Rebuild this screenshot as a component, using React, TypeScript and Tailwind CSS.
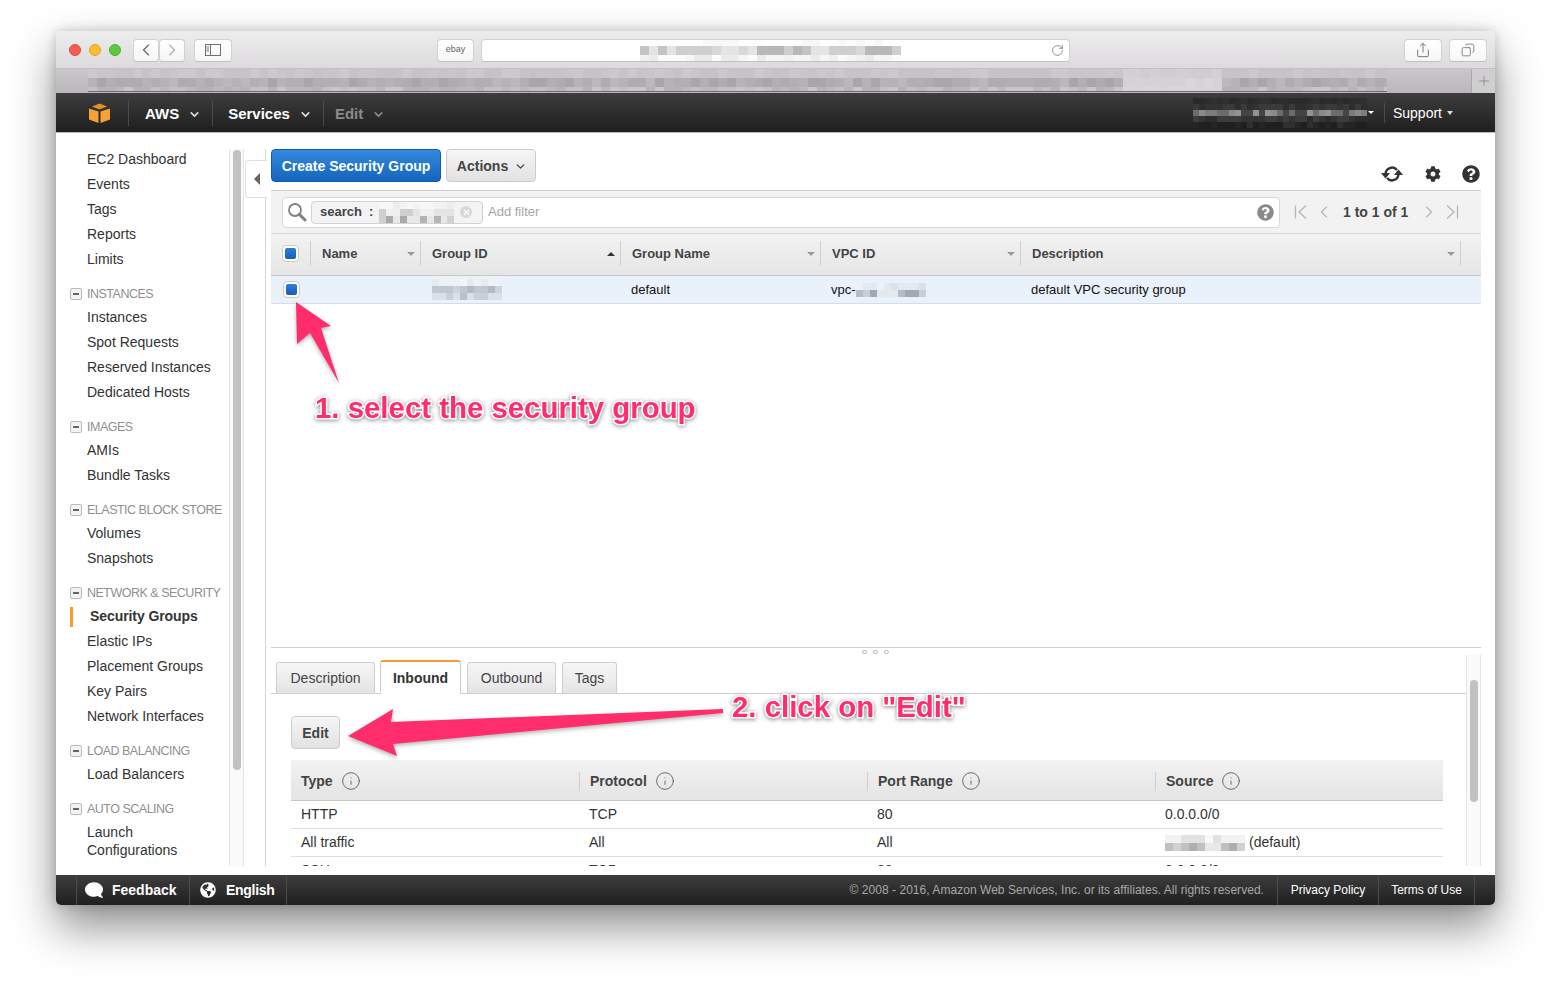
import { ChevronDown, ChevronLeft, ChevronRight, Info, RotateCw, Share, Copy, Plus, X } from 'lucide-react';
import { FaCog, FaComment, FaGlobeAmericas, FaQuestionCircle } from 'react-icons/fa';

// pixelated (redacted) strip, one palette per row
const Blur = ({ cols, cell, palettes, seed = 1 }: { cols: number; cell: number; palettes: string[][]; seed?: number }) => (
    <div className="flex flex-col shrink-0">
        {palettes.map((palette, r) => (
            <div key={r} className="flex">
                {Array.from({ length: cols }).map((_, c) => {
                    const noise = Math.abs(Math.sin(c * 12.9898 + r * 78.233 + seed) * 43758.5453) % 1;
                    return <div key={c} style={{ width: cell, height: cell, backgroundColor: palette[Math.floor(noise * palette.length)] }} />;
                })}
            </div>
        ))}
    </div>
);

const tabGrey = [
    ['#c8c6c8', '#c5c3c5', '#cbc9cb', '#c6c4c6'],
    ['#aeacae', '#b5b3b5', '#a8a6a8', '#bab8ba', '#b1afb1'],
    ['#bbb9bb', '#c2c0c2', '#b5b3b5', '#c8c6c8'],
];
const tabLight = [['#d2d0d2', '#cfcdcf'], ['#d8d6d8', '#d4d2d4'], ['#d8d6d8', '#d6d4d6']];

const Chrome = ({ className, children }: { className: string; children: React.ReactNode }) => (
    <div className={`h-[23px] flex items-center justify-center bg-gradient-to-b from-white to-[#f6f6f6] border border-[#d2d0d2] border-b-[#c2c0c2] rounded-[4px] text-[#666] ${className}`}>
        {children}
    </div>
);

const TitleBar = () => (
    <div className="h-[37px] pt-px flex items-center bg-gradient-to-b from-[#eeedee] to-[#dcdadc] rounded-t-[5px] relative">
        <div className="flex gap-[8px] ml-[13px]">
            <div className="w-[12px] h-[12px] rounded-full bg-[#f45c54] border border-[#e2483f]" />
            <div className="w-[12px] h-[12px] rounded-full bg-[#fbbd2e] border border-[#e3a521]" />
            <div className="w-[12px] h-[12px] rounded-full bg-[#5fc83f] border border-[#4cb02d]" />
        </div>
        <Chrome className="w-[26px] ml-[12px]"><ChevronLeft size={20} strokeWidth={1.4} /></Chrome>
        <Chrome className="w-[26px] text-[#b0b0b0]"><ChevronRight size={20} strokeWidth={1.4} /></Chrome>
        <Chrome className="w-[38px] ml-[9px]">
            <svg width="16" height="12" viewBox="0 0 16 12" fill="none" stroke="#707070">
                <rect x="0.5" y="0.5" width="15" height="11" />
                <path d="M5.5 0.5V11.5M1.5 3H4M1.5 5H4M1.5 7H4" />
            </svg>
        </Chrome>
        <Chrome className="w-[37px] ml-[205px] text-[9px]">ebay</Chrome>
        <Chrome className="w-[589px] ml-[7px] relative justify-start bg-none bg-white overflow-hidden">
            <div className="ml-[158px]">
                <Blur
                    cols={29}
                    cell={9}
                    seed={4}
                    palettes={[
                        ['#ffffff', '#fdfdfd', '#f8f8f8'],
                        ['#d8d8d8', '#c4c4c4', '#e4e4e4', '#b8b8b8', '#cfcfcf'],
                        ['#f6f6f6', '#f0f0f0', '#fbfbfb', '#ebebeb'],
                    ]}
                />
            </div>
            <RotateCw size={13} strokeWidth={1.3} className="absolute right-[5px] top-[4px]" />
        </Chrome>
        <Chrome className="w-[38px] ml-[334px]"><Share size={16} strokeWidth={1.3} /></Chrome>
        <Chrome className="w-[38px] ml-[7px]"><Copy size={14} strokeWidth={1.3} className="scale-x-[-1]" /></Chrome>
    </div>
);

const TabBar = () => (
    <div className="h-[25px] flex bg-gradient-to-b from-[#c9c7c9] to-[#b9b7b9] border-t border-[#c2c0c2]">
        <div className="flex ml-[32px] w-[1299px] border-b-[1px] border-[#6e6e6e] h-[23px] overflow-hidden">
            <Blur cols={115} cell={9} palettes={tabGrey} seed={2} />
            <Blur cols={11} cell={9} palettes={tabLight} seed={3} />
            <Blur cols={20} cell={9} palettes={tabGrey} seed={6} />
        </div>
        <div className="flex-1" />
        <div className="w-[24px] flex items-center justify-center border-l border-[#a9a7a9] bg-[#d0ced0] text-[#7a7a7a]">
            <Plus size={16} strokeWidth={1} />
        </div>
    </div>
);

const NavItem = ({ label, className, chevron }: { label: string; className: string; chevron: string }) => (
    <div className="flex items-center h-[26px] border-l border-[#4b4b4b]">
        <span className={`mt-[3px] text-[15px] font-bold ${className}`}>{label}</span>
        <ChevronDown size={13} strokeWidth={3} className={`mt-[3px] ${chevron}`} />
    </div>
);

const NavBar = () => (
    <div className="h-[40px] flex items-center bg-gradient-to-b from-[#3d3d3d] to-[#1f1f1f] border-b border-[#bdbdbd]">
        <svg width="21" height="20" viewBox="0 0 21 20" className="ml-[33px] mr-[18px]">
            <path d="M0 5.5L9.5 8.5V20L0 16.5Z" fill="#f7a035" />
            <path d="M11.5 8.5L21 5.5V16.5L11.5 20Z" fill="#f7a035" />
            <path d="M3 3.5L10.5 0.5L18 3.5L10.5 6.5Z" fill="#e88f24" />
        </svg>
        <NavItem label="AWS" className="ml-[16px] mr-[9px] text-white" chevron="mr-[11px] text-[#ddd]" />
        <NavItem label="Services" className="ml-[15px] mr-[9px] text-white" chevron="mr-[11px] text-[#ddd]" />
        <NavItem label="Edit" className="ml-[11px] mr-[9px] text-[#8a8a8a]" chevron="text-[#8a8a8a]" />
        <div className="ml-auto flex items-center">
            <Blur
                cols={29}
                cell={6}
                seed={5}
                palettes={[
                    ['#2a2a2a', '#303030', '#2d2d2d'],
                    ['#333333', '#3a3a3a', '#2e2e2e'],
                    ['#8a8a8a', '#7c7c7c', '#6c6c6c', '#929292', '#444444'],
                    ['#2b2b2b', '#333333', '#3c3c3c'],
                    ['#1f1f1f', '#252525', '#2f2f2f'],
                ]}
            />
            <div className="w-0 h-0 border-l-[3px] border-r-[3px] border-t-[3px] border-transparent border-t-white ml-[1px]" />
            <div className="w-px h-[20px] bg-[#4b4b4b] ml-[10px]" />
            <span className="mt-[2px] text-[14px] text-white ml-[8px]">Support</span>
            <div className="w-0 h-0 border-l-[3px] border-r-[3px] border-t-[4px] border-transparent border-t-[#ddd] ml-[5px] mr-[42px]" />
        </div>
    </div>
);

const sections = [
    { items: ['EC2 Dashboard', 'Events', 'Tags', 'Reports', 'Limits'] },
    { title: 'INSTANCES', items: ['Instances', 'Spot Requests', 'Reserved Instances', 'Dedicated Hosts'] },
    { title: 'IMAGES', items: ['AMIs', 'Bundle Tasks'] },
    { title: 'ELASTIC BLOCK STORE', items: ['Volumes', 'Snapshots'] },
    { title: 'NETWORK & SECURITY', items: ['Security Groups', 'Elastic IPs', 'Placement Groups', 'Key Pairs', 'Network Interfaces'] },
    { title: 'LOAD BALANCING', items: ['Load Balancers'] },
    { title: 'AUTO SCALING', items: ['Launch Configurations'] },
];

const Sidebar = () => (
    <div className="w-[173px] shrink-0 pt-[14px] overflow-hidden">
        {sections.map((section, i) => (
            <div key={i} className={section.title ? 'mt-[11px]' : ''}>
                {section.title && (
                    <div className="h-[22px] flex items-center pl-[14px]">
                        <div className="w-[12px] h-[12px] flex items-center justify-center rounded-[2px] border border-[#bbb] bg-[#f2f2f2] mr-[5px]">
                            <div className="w-[6px] h-[2px] bg-[#666]" />
                        </div>
                        <span className="text-[12.5px] tracking-[-0.5px] text-[#8f8f8f] whitespace-nowrap">{section.title}</span>
                    </div>
                )}
                {section.items.map((item) =>
                    item === 'Security Groups' ? (
                        <div key={item} className="h-[25px] flex items-center pl-[14px]">
                            <div className="w-[3px] h-[20px] bg-[#f79c2d] mr-[17px]" />
                            <span className="text-[14px] font-bold text-[#333] tracking-[-0.08px]">{item}</span>
                        </div>
                    ) : item === 'Launch Configurations' ? (
                        <div key={item} className="pl-[31px] pt-[3px] text-[14px] leading-[18px] text-[#333] w-[140px]">{item}</div>
                    ) : (
                        <div key={item} className="h-[25px] flex items-center pl-[31px] text-[14px] text-[#333] whitespace-nowrap">{item}</div>
                    ),
                )}
            </div>
        ))}
    </div>
);

const Rail = () => (
    <>
        <div className="w-[15px] shrink-0 mt-[16px] border-x border-[#e4e4e4] bg-[#fafafa] relative">
            <div className="absolute left-[3px] top-[1px] w-[8px] h-[620px] rounded-[4px] bg-[#c2c2c2]" />
        </div>
        <div className="w-[22px] shrink-0 mt-[16px] border-r border-[#d5d5d5] relative">
            <div className="absolute left-[1px] top-[11px] w-[22px] h-[38px] bg-white border border-r-0 border-[#e0e0e0] rounded-l-[4px] flex items-center justify-center">
                <div className="w-0 h-0 border-y-[6px] border-r-[6px] border-transparent border-r-[#666]" />
            </div>
        </div>
    </>
);

const columns = [
    { label: 'Name', width: 'w-[110px]', arrow: 'down' },
    { label: 'Group ID', width: 'w-[200px]', arrow: 'up' },
    { label: 'Group Name', width: 'w-[200px]', arrow: 'down' },
    { label: 'VPC ID', width: 'w-[200px]', arrow: 'down' },
    { label: 'Description', width: 'w-[440px]', arrow: 'down' },
];

const Checkbox = ({ className }: { className: string }) => (
    <div className={`w-[17px] h-[17px] p-[2px] rounded-[4px] border border-[#ccc] bg-white ${className}`}>
        <div className="w-full h-full rounded-[2px] bg-gradient-to-b from-[#2c7fd8] to-[#165fb5]" />
    </div>
);

const Toolbar = () => (
    <div className="h-[58px] shrink-0 flex border-b border-[#cfcfcf]">
        <button className="mt-[16px] h-[33px] w-[170px] pt-px rounded-[4px] border border-[#115ca8] bg-gradient-to-b from-[#338ade] to-[#1464bd] text-white text-[14px] font-bold">Create Security Group</button>
        <button className="mt-[16px] h-[33px] w-[90px] pt-px pl-[2px] ml-[5px] rounded-[4px] border border-[#ccc] bg-gradient-to-b from-[#f6f6f6] to-[#e2e2e2] text-[#444] text-[14px] font-bold flex items-center justify-center gap-[6px]">
            Actions <ChevronDown size={13} strokeWidth={2.5} />
        </button>
        <div className="ml-auto flex items-center mt-[24px] text-[#333]">
            <svg width="22" height="16" viewBox="0 0 22 16" fill="none" stroke="currentColor" strokeWidth="2.4">
                <path d="M4.5 8A6.5 6.5 0 0 1 16 4" />
                <path d="M17.5 8A6.5 6.5 0 0 1 6 12" />
                <path d="M0 7H9L4.5 12.5Z" fill="currentColor" stroke="none" />
                <path d="M22 9H13L17.5 3.5Z" fill="currentColor" stroke="none" />
            </svg>
            <FaCog size={16} className="ml-[22px]" />
            <FaQuestionCircle size={18} className="ml-[21px] mr-[1px]" />
        </div>
    </div>
);

const FilterBar = () => (
    <div className="h-[43px] shrink-0 flex items-center bg-[#f2f2f2] border-b border-[#d5d5d5]">
        <div className="ml-[11px] w-[998px] h-[31px] flex items-center bg-white border border-[#d8d8d8] rounded-[4px]">
            <svg width="20" height="20" viewBox="0 0 20 20" fill="none" stroke="#808080" className="ml-[4px]">
                <circle cx="8" cy="8" r="6" strokeWidth="1.8" />
                <path d="M12.5 12.5L18 18" strokeWidth="3" strokeLinecap="round" />
            </svg>
            <div className="ml-[4px] h-[23px] w-[172px] flex items-center rounded-[4px] border border-[#d2d2d2] bg-[#f3f3f3] pl-[8px] overflow-hidden">
                <span className="text-[13px] font-bold text-[#444]">search</span>
                <span className="text-[13px] font-bold text-[#444] ml-[7px] mr-[6px]">:</span>
                <div className="w-[75px] shrink-0">
                    <Blur
                        cols={11}
                        cell={7}
                        seed={7}
                        palettes={[
                            ['#f3f3f3', '#ececec', '#f7f7f7'],
                            ['#e4e4e4', '#cfcfcf', '#f0f0f0'],
                            ['#d0d0d0', '#aaaaaa', '#b4b4b4', '#e8e8e8'],
                        ]}
                    />
                </div>
                <div className="ml-[6px] w-[12px] h-[12px] rounded-full bg-[#d8d8d8] flex items-center justify-center text-white">
                    <X size={9} strokeWidth={3} />
                </div>
            </div>
            <span className="ml-[5px] text-[13px] text-[#a5a5a5]">Add filter</span>
            <FaQuestionCircle size={17} className="ml-auto mr-[5px] text-[#8a8a8a]" />
        </div>
        <div className="flex items-center text-[#b5b5b5] ml-[14px]">
            <svg width="14" height="16" viewBox="0 0 14 16" fill="none" stroke="currentColor" strokeWidth="1.3"><path d="M1.5 1.5V14.5M12 1.5L5 8L12 14.5" /></svg>
            <ChevronLeft size={20} strokeWidth={1.4} className="ml-[6px]" />
            <span className="text-[14px] font-bold text-[#444] ml-[9px] whitespace-nowrap">1 to 1 of 1</span>
            <ChevronRight size={20} strokeWidth={1.4} className="ml-[11px]" />
            <svg width="14" height="16" viewBox="0 0 14 16" fill="none" stroke="currentColor" strokeWidth="1.3" className="ml-[6px]"><path d="M12.5 1.5V14.5M2 1.5L9 8L2 14.5" /></svg>
        </div>
    </div>
);

const GroupTable = () => (
    <>
        <div className="h-[42px] shrink-0 pb-[2px] flex items-center bg-gradient-to-b from-[#f2f2f2] to-[#e6e6e6] border-b border-[#c8c8c8]">
            <div className="w-[40px] shrink-0 h-[25px] flex items-center border-r border-[#d0d0d0]">
                <Checkbox className="ml-[11px]" />
            </div>
            {columns.map((col) => (
                <div key={col.label} className={`${col.width} shrink-0 h-[25px] flex items-center justify-between pl-[11px] pr-[5px] border-r border-[#d0d0d0]`}>
                    <span className="text-[13px] font-bold text-[#444]">{col.label}</span>
                    {col.arrow === 'up' ? (
                        <div className="w-0 h-0 border-x-[4px] border-b-[4px] border-transparent border-b-[#333]" />
                    ) : (
                        <div className="w-0 h-0 border-x-[4px] border-t-[4px] border-transparent border-t-[#999]" />
                    )}
                </div>
            ))}
        </div>
        <div className="h-[28px] shrink-0 flex items-center bg-[#e9f1fb] border-b border-[#d5dde8] text-[13px] text-[#111]">
            <Checkbox className="ml-[12px] mr-[11px]" />
            <div className="w-[110px] shrink-0" />
            <div className="w-[200px] shrink-0 pl-[11px]">
                <Blur
                    cols={10}
                    cell={7}
                    seed={8}
                    palettes={[
                        ['#f3f5f8', '#eef1f5', '#e7ebf0'],
                        ['#bfc7d2', '#b3bac6', '#cdd3dc', '#dbe0e8'],
                        ['#c8cfd9', '#b8c0cb', '#dbe0e8'],
                    ]}
                />
            </div>
            <div className="w-[200px] shrink-0 pl-[10px]">default</div>
            <div className="w-[200px] shrink-0 pl-[10px] flex items-center">
                vpc-
                <Blur
                    cols={10}
                    cell={7}
                    seed={9}
                    palettes={[
                        ['#e4e9f0', '#dbe1e9', '#eef2f7'],
                        ['#b4bcc6', '#c8cfd8', '#a0a8b3', '#e4e9f0'],
                    ]}
                />
            </div>
            <div className="pl-[10px]">default VPC security group</div>
        </div>
    </>
);

const tabs = [
    { label: 'Description', width: 'w-[99px] mr-[5px]' },
    { label: 'Inbound', width: 'w-[81px] mr-[6px]', active: true },
    { label: 'Outbound', width: 'w-[89px] mr-[6px]' },
    { label: 'Tags', width: 'w-[55px]' },
];

const rules = [
    ['HTTP', 'TCP', '80', '0.0.0.0/0'],
    ['All traffic', 'All', 'All', ''],
    ['SSH', 'TCP', '22', '0.0.0.0/0'],
];

const DetailPanel = () => (
    <div className="flex-1 min-h-0 flex flex-col border-t border-[#cfcfcf] overflow-hidden">
        <div className="h-[7px] shrink-0 flex justify-center items-center gap-[6px] pr-[2px]">
            <div className="w-[5px] h-[4px] rounded-full border border-[#bbb]" />
            <div className="w-[5px] h-[4px] rounded-full border border-[#bbb]" />
            <div className="w-[5px] h-[4px] rounded-full border border-[#bbb]" />
        </div>
        <div className="flex-1 min-h-0 flex">
            <div className="flex-1 min-w-0 pt-[5px] overflow-hidden">
                <div className="h-[34px] flex items-end pl-[5px] border-b border-[#cfcfcf]">
                    {tabs.map((tab) => (
                        <div
                            key={tab.label}
                            className={
                                tab.active
                                    ? `${tab.width} h-[34px] pt-px -mb-px flex items-center justify-center text-[14px] font-bold text-[#333] bg-white border border-b-0 border-[#cfcfcf] border-t-2 border-t-[#f79c2d] rounded-t-[3px]`
                                    : `${tab.width} h-[31px] pt-px flex items-center justify-center text-[14px] text-[#444] bg-gradient-to-b from-[#f6f6f6] to-[#e4e4e4] border border-b-0 border-[#cfcfcf] rounded-t-[3px]`
                            }
                        >
                            {tab.label}
                        </div>
                    ))}
                </div>
                <div className="pl-[20px] pr-[23px]">
                    <button className="mt-[22px] w-[49px] h-[33px] pt-px rounded-[4px] border border-[#ccc] bg-gradient-to-b from-[#f6f6f6] to-[#e2e2e2] text-[14px] font-bold text-[#444]">Edit</button>
                    <div className="mt-[11px] h-[41px] pt-[2px] grid grid-cols-4 items-center bg-gradient-to-b from-[#f2f2f2] to-[#e4e4e4] border-b border-[#c8c8c8]">
                        {['Type', 'Protocol', 'Port Range', 'Source'].map((h, i) => (
                            <div key={h} className={`h-[19px] flex items-center pl-[10px] gap-[8px] ${i > 0 ? 'border-l border-[#d0d0d0]' : ''}`}>
                                <span className="text-[14px] font-bold text-[#444]">{h}</span>
                                <Info size={20} strokeWidth={1} className="text-[#555]" />
                            </div>
                        ))}
                    </div>
                    {rules.map((rule) => (
                        <div key={rule[0]} className="h-[28px] grid grid-cols-4 items-center border-b border-[#e0e0e0] text-[14px] text-[#333]">
                            {rule.map((cell, i) => (
                                <div key={i} className="pl-[10px] flex items-center">
                                    {i === 3 && cell === '' ? (
                                        <>
                                            <Blur
                                                cols={10}
                                                cell={8}
                                                seed={11}
                                                palettes={[
                                                    ['#f2f2f2', '#e2e2e2', '#f8f8f8'],
                                                    ['#c0c0c0', '#d2d2d2', '#aeaeae', '#e8e8e8'],
                                                ]}
                                            />
                                            <span className="ml-[4px]">(default)</span>
                                        </>
                                    ) : (
                                        cell
                                    )}
                                </div>
                            ))}
                        </div>
                    ))}
                </div>
            </div>
            <div className="w-[15px] shrink-0 border-x border-[#e4e4e4] bg-[#fafafa] pt-[25px]">
                <div className="ml-[3px] w-[8px] h-[122px] rounded-[4px] bg-[#c2c2c2]" />
            </div>
        </div>
    </div>
);

const Footer = () => (
    <div className="h-[30px] shrink-0 flex items-center bg-gradient-to-b from-[#3d3d3d] to-[#1f1f1f] rounded-b-[5px] text-white">
        <div className="ml-[20px] h-full w-[114px] flex items-center border-x border-[#4b4b4b] pl-[8px]">
            <FaComment size={18} className="scale-x-[-1]" />
            <span className="ml-[9px] text-[14px] font-bold">Feedback</span>
        </div>
        <div className="h-full w-[97px] flex items-center border-r border-[#4b4b4b] pl-[10px]">
            <FaGlobeAmericas size={16} />
            <span className="ml-[10px] text-[14px] font-bold tracking-[-0.3px]">English</span>
        </div>
        <span className="ml-auto text-[12px] text-[#a8a8a8] tracking-[0.04px] mr-[13px] whitespace-nowrap">© 2008 - 2016, Amazon Web Services, Inc. or its affiliates. All rights reserved.</span>
        <div className="h-full w-[101px] flex items-center justify-center border-l border-[#4b4b4b] text-[12px]">Privacy Policy</div>
        <div className="h-full w-[97px] flex items-center justify-center border-x border-[#4b4b4b] text-[12px]">Terms of Use</div>
        <div className="w-[20px]" />
    </div>
);

const annotationText =
    "absolute whitespace-nowrap font-bold text-[29.4px] leading-[36px] text-[#ff2d6b] [-webkit-text-stroke:3px_#fff] [paint-order:stroke_fill] [filter:drop-shadow(0_1px_2px_rgba(0,0,0,0.45))]";

const Annotations = () => (
    <>
        <svg width="1551" height="985" viewBox="0 0 1551 985" className="absolute left-0 top-0 pointer-events-none [filter:drop-shadow(0_2px_2px_rgba(0,0,0,0.3))]">
            <polygon points="296,302 331,326 321,328 339,383 310,333 297,344" fill="#ff2d6b" />
            <polygon points="348,736 393,709 391,722 723,709 723,713 393,744 397,756" fill="#ff2d6b" />
        </svg>
        <div className={`${annotationText} left-[315px] top-[390px]`}>1. select the security group</div>
        <div className={`${annotationText} left-[732px] top-[689px]`}>2. click on "Edit"</div>
    </>
);

export default function App() {
    return (
        <div className="relative w-[1551px] h-[985px] overflow-hidden bg-white pt-[31px] pl-[56px] font-['Liberation_Sans',Arial,sans-serif]">
            <div className="w-[1439px] h-[874px] flex flex-col rounded-[5px] bg-white shadow-[0_22px_45px_rgba(0,0,0,0.45),0_0_12px_rgba(0,0,0,0.2)]">
                <TitleBar />
                <TabBar />
                <NavBar />
                <div className="flex-1 min-h-0 flex pb-[9px]">
                    <Sidebar />
                    <Rail />
                    <div className="flex-1 min-w-0 flex flex-col ml-[5px] mr-[14px]">
                        <Toolbar />
                        <FilterBar />
                        <GroupTable />
                        <div className="h-[343px] shrink-0" />
                        <DetailPanel />
                    </div>
                </div>
                <Footer />
            </div>
            <Annotations />
        </div>
    );
}
